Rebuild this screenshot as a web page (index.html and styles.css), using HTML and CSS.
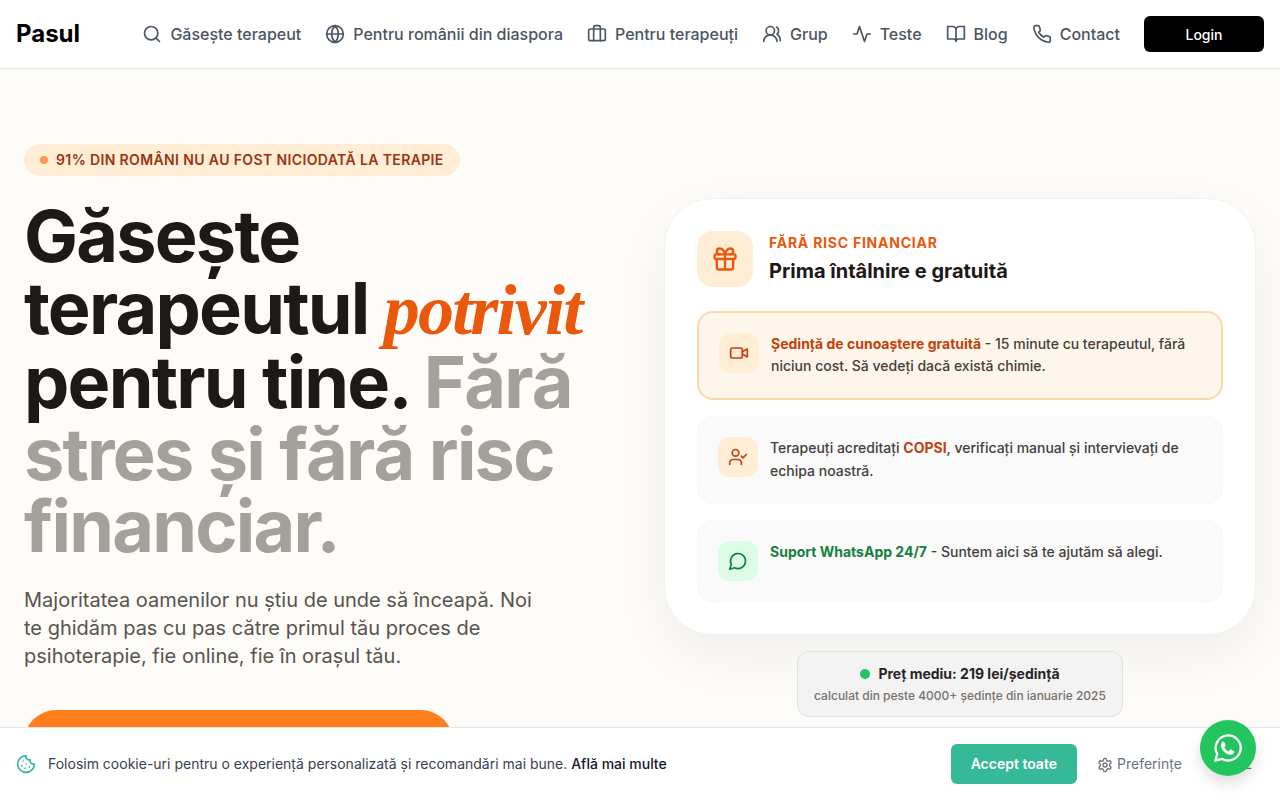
FILE: index.html
```html
<!DOCTYPE html>
<html lang="ro">
<head>
	<meta charset="utf-8">
	<title>Pasul</title>
	<meta name="viewport" content="width=device-width, initial-scale=1">
	<link rel="stylesheet" href="styles.css">
</head>
<body>
<header class="header">
	<a class="logo" href="#">Pasul</a>
	<nav class="nav">
		<a href="#"><svg class="icon" viewBox="0 0 24 24"><circle cx="11" cy="11" r="8"/><path d="m21 21-4.35-4.35"/></svg>Găsește terapeut</a>
		<a href="#"><svg class="icon" viewBox="0 0 24 24"><circle cx="12" cy="12" r="10"/><path d="M12 2a14.5 14.5 0 0 0 0 20 14.5 14.5 0 0 0 0-20M2 12h20"/></svg>Pentru românii din diaspora</a>
		<a href="#"><svg class="icon" viewBox="0 0 24 24"><rect x="2" y="6" width="20" height="14" rx="2"/><path d="M16 20V4a2 2 0 0 0-2-2h-4a2 2 0 0 0-2 2v16"/></svg>Pentru terapeuți</a>
		<a href="#"><svg class="icon" viewBox="0 0 24 24"><circle cx="10" cy="8" r="5"/><path d="M18 21a8 8 0 0 0-16 0M22 20c0-3.37-2-6.5-4-8a5 5 0 0 0-.45-8.3"/></svg>Grup</a>
		<a href="#"><svg class="icon" viewBox="0 0 24 24"><path d="M22 12h-4l-3 9L9 3l-3 9H2"/></svg>Teste</a>
		<a href="#"><svg class="icon" viewBox="0 0 24 24"><path d="M2 3h6a4 4 0 0 1 4 4v14a3 3 0 0 0-3-3H2zM22 3h-6a4 4 0 0 0-4 4v14a3 3 0 0 1 3-3h7z"/></svg>Blog</a>
		<a href="#"><svg class="icon" viewBox="0 0 24 24"><path d="M22 16.92v3a2 2 0 0 1-2.18 2 19.79 19.79 0 0 1-8.63-3.07 19.5 19.5 0 0 1-6-6 19.79 19.79 0 0 1-3.07-8.67A2 2 0 0 1 4.11 2h3a2 2 0 0 1 2 1.72 12.84 12.84 0 0 0 .7 2.81 2 2 0 0 1-.45 2.11L8.09 9.91a16 16 0 0 0 6 6l1.27-1.27a2 2 0 0 1 2.11-.45 12.84 12.84 0 0 0 2.81.7A2 2 0 0 1 22 16.92z"/></svg>Contact</a>
		<a class="login" href="#">Login</a>
	</nav>
</header>

<main class="hero">
	<section class="intro">
		<div class="badge"><span class="badge-dot"></span>91% DIN ROMÂNI NU AU FOST NICIODATĂ LA TERAPIE</div>
		<h1>Găsește terapeutul <em>potrivit</em> pentru tine. <span class="muted"><span class="loose">Fără</span> stres și <span class="loose">fără</span> risc financiar.</span></h1>
		<p class="lead">Majoritatea oamenilor nu știu de unde să înceapă. Noi te ghidăm pas cu pas către primul tău proces de psihoterapie, fie online, fie în orașul tău.</p>
		<a class="cta" href="#" aria-label="Găsește terapeut"></a>
	</section>

	<section class="offer">
		<div class="card">
			<div class="card-head">
				<div class="gift"><svg class="icon" viewBox="0 0 24 24"><rect x="3" y="8" width="18" height="4" rx="1"/><path d="M12 8v13M19 12v7a2 2 0 0 1-2 2H7a2 2 0 0 1-2-2v-7M7.5 8a2.5 2.5 0 0 1 0-5A4.8 8 0 0 1 12 8a4.8 8 0 0 1 4.5-5 2.5 2.5 0 0 1 0 5"/></svg></div>
				<div>
					<div class="eyebrow">FĂRĂ RISC FINANCIAR</div>
					<h2>Prima întâlnire e gratuită</h2>
				</div>
			</div>
			<div class="item highlight">
				<div class="tile"><svg class="icon" viewBox="0 0 24 24"><path d="m16 13 5.223 3.482a.5.5 0 0 0 .777-.416V7.87a.5.5 0 0 0-.752-.432L16 10.5"/><rect x="2" y="6" width="14" height="12" rx="2"/></svg></div>
				<p><strong>Ședință de cunoaștere gratuită</strong> - 15 minute cu terapeutul, fără niciun cost. Să vedeți dacă există chimie.</p>
			</div>
			<div class="item">
				<div class="tile"><svg class="icon" viewBox="0 0 24 24"><path d="M16 21v-2a4 4 0 0 0-4-4H6a4 4 0 0 0-4 4v2"/><circle cx="9" cy="7" r="4"/><path d="m16 11 2 2 4-4"/></svg></div>
				<p>Terapeuți acreditați <strong>COPSI</strong>, verificați manual și intervievați de echipa noastră.</p>
			</div>
			<div class="item green">
				<div class="tile"><svg class="icon" viewBox="0 0 24 24"><path d="M7.9 20A9 9 0 1 0 4 16.1L2 22Z"/></svg></div>
				<p><strong>Suport WhatsApp 24/7</strong> - Suntem aici să te ajutăm să alegi.</p>
			</div>
		</div>
		<div class="price">
			<div class="price-main"><span class="price-dot"></span>Preț mediu: 219 lei/ședință</div>
			<div class="price-note">calculat din peste 4000+ ședințe din ianuarie 2025</div>
		</div>
	</section>
</main>

<div class="cookies">
	<svg class="icon cookie" viewBox="0 0 24 24"><path d="M12 2a10 10 0 1 0 10 10 4 4 0 0 1-5-5 4 4 0 0 1-5-5M8.5 8.5v.01M16 15.5v.01M12 12v.01M11 17v.01M7 14v.01"/></svg>
	<p>Folosim cookie-uri pentru o experiență personalizată și recomandări mai bune. <a href="#">Află mai multe</a></p>
	<div class="cookie-actions">
		<button class="accept">Accept toate</button>
		<button class="plain"><svg class="icon" viewBox="0 0 24 24"><path d="M12.22 2h-.44a2 2 0 0 0-2 2v.18a2 2 0 0 1-1 1.73l-.43.25a2 2 0 0 1-2 0l-.15-.08a2 2 0 0 0-2.73.73l-.22.38a2 2 0 0 0 .73 2.73l.15.1a2 2 0 0 1 1 1.72v.51a2 2 0 0 1-1 1.74l-.15.09a2 2 0 0 0-.73 2.73l.22.38a2 2 0 0 0 2.73.73l.15-.08a2 2 0 0 1 2 0l.43.25a2 2 0 0 1 1 1.73V20a2 2 0 0 0 2 2h.44a2 2 0 0 0 2-2v-.18a2 2 0 0 1 1-1.73l.43-.25a2 2 0 0 1 2 0l.15.08a2 2 0 0 0 2.73-.73l.22-.39a2 2 0 0 0-.73-2.73l-.15-.08a2 2 0 0 1-1-1.74v-.5a2 2 0 0 1 1-1.74l.15-.09a2 2 0 0 0 .73-2.73l-.22-.38a2 2 0 0 0-2.73-.73l-.15.08a2 2 0 0 1-2 0l-.43-.25a2 2 0 0 1-1-1.73V4a2 2 0 0 0-2-2z"/><circle cx="12" cy="12" r="3"/></svg>Preferințe</button>
		<button class="plain">Refuz</button>
	</div>
</div>

<a class="whatsapp" href="#" aria-label="WhatsApp">
	<svg viewBox="0 0 28 28"><path class="ring" d="M1.4 26.6 3.2 20a12.5 12.5 0 1 1 4.7 4.8z"/><path class="phone" d="M8.4 7.9c.6-.6 1.5-.5 1.8.1l1.3 2.9c.2.5 0 .9-.3 1.3l-.9 1.1c.9 1.9 2.3 3.2 4.2 4.1l1.3-1.5c.3-.4.7-.5 1.2-.3l2.8 1.4c.5.3.6.7.4 1.3-.6 1.8-2 2.6-3.7 2.5-5.3-.7-9.3-4.900-9.500-9.300 0-1.400.500-2.700 1.400-3.600z"/></svg>
</a>
</body>
</html>
```

FILE: styles.css
```css
* {
	box-sizing: border-box;
	margin: 0;
	padding: 0;
}

body {
	height: 800px;
	overflow: hidden;
	background: #fdfcf8;
	font-family: Inter, "Liberation Sans", sans-serif;
	color: #1c1917;
}

a {
	color: inherit;
	text-decoration: none;
}

.icon {
	flex: none;
	width: 20px;
	height: 20px;
	fill: none;
	stroke: currentColor;
	stroke-width: 2;
	stroke-linecap: round;
	stroke-linejoin: round;
}

/* header */
.header {
	display: flex;
	align-items: center;
	justify-content: space-between;
	height: 69px;
	padding: 0 16px;
	background: #fff;
	border-bottom: 1px solid #e5e7eb;
}

.logo {
	font-size: 24px;
	font-weight: 700;
	line-height: 32px;
	color: #000;
}

.nav {
	display: flex;
	align-items: center;
	gap: 24px;
	font-size: 16px;
	font-weight: 500;
	color: #4b5563;
}

.nav a {
	display: flex;
	align-items: center;
	gap: 8px;
	white-space: nowrap;
}

.nav .login {
	justify-content: center;
	width: 120px;
	height: 36px;
	border-radius: 6px;
	background: #000;
	color: #fff;
	font-size: 14px;
}

/* hero */
.hero {
	display: grid;
	grid-template-columns: 1fr 1fr;
	gap: 48px;
	padding: 75px 24px 0;
}

.badge {
	display: inline-flex;
	align-items: center;
	gap: 8px;
	height: 32px;
	padding: 0 16px 1px;
	border-radius: 16px;
	background: #ffedd5;
	color: #9a3412;
	font-size: 14px;
	font-weight: 600;
	letter-spacing: 0.375px;
	white-space: nowrap;
}

.badge-dot {
	width: 8px;
	height: 8px;
	border-radius: 50%;
	background: #fd9a55;
}

h1 {
	margin-top: 24px;
	font-size: 72px;
	font-weight: 700;
	line-height: 72px;
	letter-spacing: -1.8px;
}

h1 em {
	font-family: "Liberation Serif", serif;
	color: #ea580c;
}

.muted {
	color: #a6a09b;
}

.loose {
	font-kerning: none;
}

.lead {
	max-width: 512px;
	margin-top: 24px;
	color: #57534e;
	font-size: 20px;
	line-height: 28px;
}

.cta {
	display: block;
	width: 429px;
	height: 64px;
	margin-top: 40px;
	border-radius: 32px;
	background: #ff7f1c;
}

.offer {
	display: flex;
	flex-direction: column;
	align-items: center;
	padding-top: 53.6px;
}

.card {
	display: flex;
	flex-direction: column;
	gap: 16px;
	width: 100%;
	padding: 32px;
	border: 1px solid #f3f3f1;
	border-radius: 48px;
	background: #fff;
	box-shadow: 0 20px 60px rgba(28, 25, 23, 0.06);
}

.card-head {
	display: flex;
	align-items: center;
	gap: 16px;
	margin-bottom: 8px;
}

.gift {
	display: flex;
	align-items: center;
	justify-content: center;
	width: 56px;
	height: 56px;
	border-radius: 16px;
	background: #ffedd5;
	color: #ea580c;
}

.gift .icon {
	width: 28px;
	height: 28px;
}

.eyebrow {
	color: #ea580c;
	font-size: 14px;
	font-weight: 700;
	line-height: 20px;
	letter-spacing: 0.76px;
}

h2 {
	margin-top: 4px;
	font-size: 20px;
	font-weight: 700;
	line-height: 28px;
}

.item {
	display: flex;
	align-items: flex-start;
	gap: 12px;
	padding: 20px;
	border: 1px solid #f7f7f7;
	border-radius: 16px;
	background: #fafafa;
	color: #44403c;
	font-size: 14px;
	font-weight: 500;
	line-height: 22.75px;
}

.item.highlight {
	border: 2px solid #f9d8a9;
	background: #fef6ea;
}

.item strong {
	color: #c2410c;
	font-weight: 700;
}

.item.green strong {
	color: #15803d;
}

.tile {
	display: flex;
	flex: none;
	align-items: center;
	justify-content: center;
	width: 40px;
	height: 40px;
	border-radius: 12px;
	background: #ffedd5;
	color: #c2410c;
}

.item.green .tile {
	background: #dcfce7;
	color: #15803d;
}

.price {
	margin-top: 16px;
	padding: 12px 16px;
	border: 1px solid #e2e2e2;
	border-radius: 12px;
	background: #f3f3f3;
	text-align: center;
}

.price-main {
	display: flex;
	align-items: center;
	justify-content: center;
	gap: 8px;
	color: #292524;
	font-size: 14px;
	font-weight: 700;
	line-height: 20px;
}

.price-dot {
	width: 10px;
	height: 10px;
	border-radius: 50%;
	background: #22c55e;
}

.price-note {
	margin-top: 4px;
	color: #78716c;
	font-size: 12px;
	font-weight: 500;
	line-height: 16px;
}

/* cookie bar */
.cookies {
	position: fixed;
	right: 0;
	bottom: 0;
	left: 0;
	display: flex;
	align-items: center;
	gap: 12px;
	height: 73px;
	padding: 0 16px;
	border-top: 1px solid #e5e7eb;
	background: #fff;
	color: #374151;
	font-size: 14px;
	line-height: 20px;
}

.cookie {
	color: #36b996;
}

.cookies p a {
	color: #111827;
	font-weight: 500;
}

.cookie-actions {
	display: flex;
	align-items: center;
	gap: 8px;
	margin-left: auto;
}

.cookie-actions button {
	display: flex;
	align-items: center;
	gap: 4px;
	height: 40px;
	border: 0;
	border-radius: 6px;
	font-family: inherit;
	font-size: 14px;
	line-height: 20px;
}

.cookie-actions .accept {
	padding: 0 20px;
	background: #36b996;
	color: #fff;
	font-weight: 600;
}

.cookie-actions .plain {
	padding: 0 12px;
	background: none;
	color: #6b7280;
}

.plain .icon {
	width: 16px;
	height: 16px;
	margin-top: 1px;
}

.whatsapp {
	position: fixed;
	right: 24px;
	bottom: 24px;
	display: flex;
	align-items: center;
	justify-content: center;
	width: 56px;
	height: 56px;
	border-radius: 50%;
	background: #22c55e;
	box-shadow: 0 8px 14px rgba(0, 0, 0, 0.12);
}

.whatsapp svg {
	width: 28px;
	height: 28px;
}

.ring {
	fill: none;
	stroke: #fff;
	stroke-width: 2.3;
	stroke-linejoin: round;
}

.phone {
	fill: #fff;
}
```
